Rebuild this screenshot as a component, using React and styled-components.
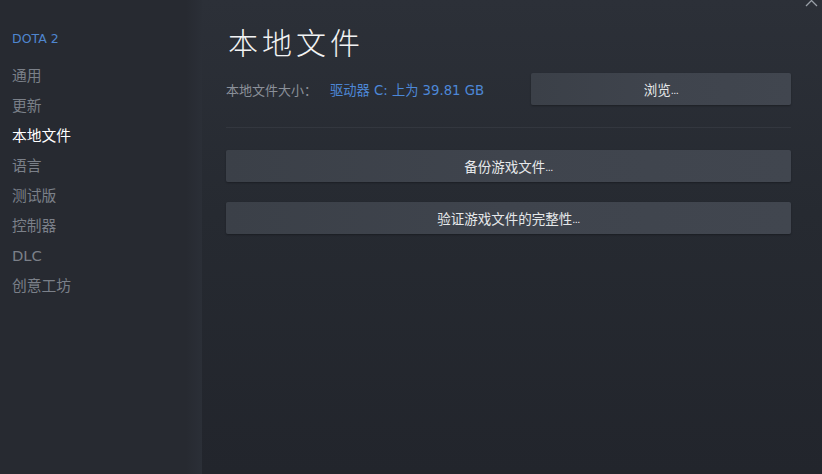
import React from 'react';
import styled, { createGlobalStyle } from 'styled-components';

const GlobalStyle = createGlobalStyle`
  html, body {
    margin: 0;
    padding: 0;
    width: 822px;
    height: 474px;
    overflow: hidden;
    background: #23262e;
  }
  * { box-sizing: border-box; }
`;

const Window = styled.div`
  display: flex;
  width: 822px;
  height: 474px;
  position: relative;
  font-family: 'DejaVu Sans', 'Noto Sans CJK SC', sans-serif;
`;

const Sidebar = styled.nav`
  width: 202px;
  flex-shrink: 0;
  background: linear-gradient(to right, #272a31 0%, #272a31 92%, #2b2f37 100%);
  padding: 30px 0 0 12px;
  display: flex;
  flex-direction: column;
`;

const GameName = styled.div`
  color: #4f86cf;
  font-size: 12.5px;
  line-height: 17px;
  margin-bottom: 19px;
`;

const NavItem = styled.div`
  color: ${(p) => (p.active ? '#ffffff' : '#7b8089')};
  font-size: 14.75px;
  line-height: 20px;
  height: 30px;
`;

const Main = styled.main`
  flex: 1;
  background: linear-gradient(to bottom, #2c3038 0%, #262a31 45%, #22252c 100%);
  padding: 20px 31px 0 24px;
  display: flex;
  flex-direction: column;
`;

const Title = styled.h1`
  margin: 0 0 0 2px;
  color: #f2f3f4;
  font-family: 'Noto Sans CJK SC', sans-serif;
  font-size: 30px;
  font-weight: 300;
  line-height: 42px;
  letter-spacing: 4px;
`;

const SizeRow = styled.div`
  display: flex;
  align-items: center;
  margin-top: 11px;
  height: 32px;
`;

const Label = styled.span`
  color: #8b9099;
  font-size: 13px;
  width: 104px;
`;

const Value = styled.span`
  color: #4d88d8;
  font-size: 13.25px;
  flex: 1;
`;

const Button = styled.button`
  display: flex;
  align-items: center;
  justify-content: center;
  width: ${(p) => (p.wide ? '100%' : '260px')};
  height: 32px;
  border: none;
  border-radius: 2px;
  background: linear-gradient(to right, #3b4048 0%, #3f444d 50%, #41464f 100%);
  box-shadow: 0 1px 2px rgba(0, 0, 0, 0.3);
  color: #e6e8ea;
  font-family: inherit;
  font-size: 13.5px;
  padding: 0;
  cursor: pointer;
  margin-top: ${(p) => p.mt || 0}px;
`;

const Dots = styled.span`
  font-family: 'Liberation Sans', sans-serif;
  font-size: 11px;
  letter-spacing: -0.5px;
  align-self: center;
  padding-top: 2px;
`;

const Divider = styled.hr`
  margin: 22px 0 0;
  border: none;
  height: 1px;
  background: #33373f;
`;

const Close = styled.div`
  position: absolute;
  right: 3px;
  top: -7px;
  width: 15px;
  height: 15px;
`;

export default function App() {
  const nav = ['通用', '更新', '本地文件', '语言', '测试版', '控制器', 'DLC', '创意工坊'];
  return (
    <>
      <GlobalStyle />
      <Window>
        <Sidebar>
          <GameName>DOTA 2</GameName>
          {nav.map((n) => (
            <NavItem key={n} active={n === '本地文件'}>
              {n}
            </NavItem>
          ))}
        </Sidebar>
        <Main>
          <Title>本地文件</Title>
          <SizeRow>
            <Label>本地文件大小：</Label>
            <Value>驱动器 C: 上为 39.81 GB</Value>
            <Button>浏览<Dots>...</Dots></Button>
          </SizeRow>
          <Divider />
          <Button wide mt={22}>备份游戏文件<Dots>...</Dots></Button>
          <Button wide mt={20}>验证游戏文件的完整性<Dots>...</Dots></Button>
        </Main>
        <Close>
          <svg width="15" height="15" viewBox="0 0 15 15">
            <path d="M2 2 L13 13 M13 2 L2 13" stroke="#9aa0a8" strokeWidth="1.3" />
          </svg>
        </Close>
      </Window>
    </>
  );
}
